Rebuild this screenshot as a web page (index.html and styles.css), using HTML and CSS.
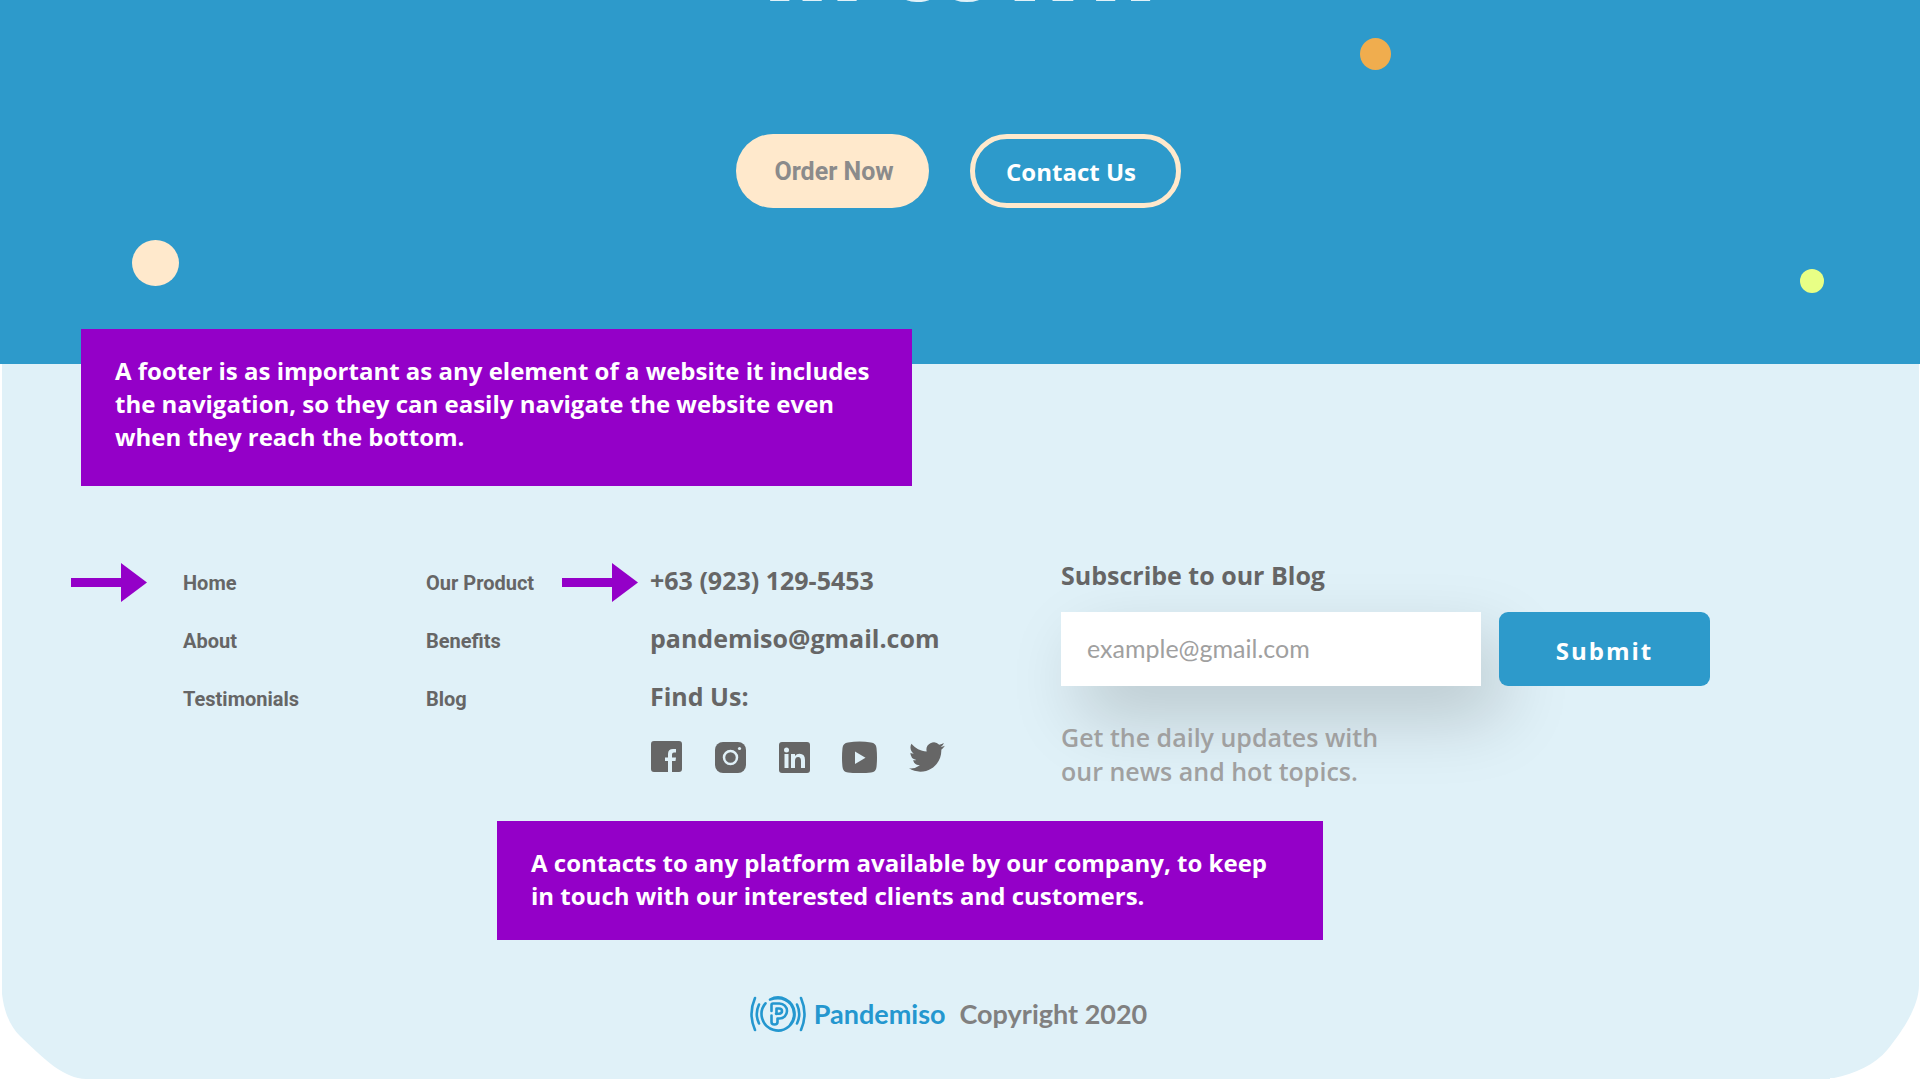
FILE: index.html
```html
<!DOCTYPE html>
<html lang="en">
<head>
<meta charset="utf-8">
<meta name="viewport" content="width=device-width, initial-scale=1">
<title>Pandemiso</title>
<link rel="stylesheet" href="styles.css">
</head>
<body>
<main class="hero">
  <h1 class="hero-title">in town</h1>
  <div class="hero-actions">
    <button type="button" class="pill pill-solid">Order Now</button>
    <button type="button" class="pill pill-outline">Contact Us</button>
  </div>
  <span class="dot dot-orange"></span>
  <span class="dot dot-cream"></span>
  <span class="dot dot-lime"></span>
</main>

<footer class="footer">
  <p class="callout callout-over">A footer is as important as any element of a website it includes<br>the navigation, so they can easily navigate the website even<br>when they reach the bottom.</p>

  <div class="columns">
    <ul class="links pointed">
      <li><a href="#home">Home</a></li>
      <li><a href="#about">About</a></li>
      <li><a href="#testimonials">Testimonials</a></li>
    </ul>
    <ul class="links">
      <li><a href="#product">Our Product</a></li>
      <li><a href="#benefits">Benefits</a></li>
      <li><a href="#blog">Blog</a></li>
    </ul>
    <address class="contact pointed">
      <a href="tel:+639231295453">+63 (923) 129-5453</a>
      <a href="mailto:pandemiso@gmail.com">pandemiso@gmail.com</a>
      <span>Find Us:</span>
      <div class="social">
        <a href="#facebook" aria-label="Facebook"><svg width="32" height="32" viewBox="0 0 32 32"><path fill="#666" fill-rule="evenodd" d="M4 0H29Q32 0 32 3V28Q32 31 29 31H22V20H25.5L26 16.500H22V13.500Q22 11.500 24 11.500H26V8H23Q18 8 18 13V16.500H15V20H18V31H4Q1 31 1 28V3Q1 0 4 0Z"/></svg></a>
        <a href="#instagram" aria-label="Instagram"><svg width="32" height="32" viewBox="0 0 32 32"><rect x="1" y="1" width="31" height="31" rx="8" fill="#666"/><circle cx="16.500" cy="16.500" r="6.500" fill="none" stroke="#e0f1f8" stroke-width="2.500"/><circle cx="25.500" cy="7.500" r="1.600" fill="#e0f1f8"/></svg></a>
        <a href="#linkedin" aria-label="LinkedIn"><svg width="32" height="32" viewBox="0 0 32 32"><rect x="1" y="1" width="31" height="31" rx="3" fill="#666"/><g fill="#e0f1f8"><circle cx="8.500" cy="9" r="2.500"/><path d="M6.500 13H10.500V27H6.500ZM13 13H17V15Q18.500 12.700 21.500 12.700Q27 12.700 27 19V27H23V20Q23 16 20.200 16Q17 16 17 20V27H13Z"/></g></svg></a>
        <a href="#youtube" aria-label="YouTube"><svg width="35" height="32" viewBox="0 0 35 32"><path fill="#666" d="M6 1.500Q17.500-.5 29 1.500Q34 2 34.500 7Q35.500 16.500 34.500 26Q34 31 29 31.500Q17.500 33 6 31.500Q1 31 .5 26Q-.5 16.500 .5 7Q1 2 6 1.500Z"/><path fill="#e0f1f8" d="M13 10.500V23L23.500 16.700Z"/></svg></a>
        <a href="#twitter" aria-label="Twitter"><svg width="36" height="32" viewBox="0 1.500 24 21"><path fill="#666" d="M23.950 4.570a10 10 0 0 1-2.820.77 4.960 4.960 0 0 0 2.160-2.720c-.95.55-2 .95-3.130 1.180a4.920 4.920 0 0 0-8.380 4.480C7.690 8.100 4.070 6.130 1.640 3.160a4.820 4.820 0 0 0-.67 2.480c0 1.710.87 3.210 2.190 4.100a4.900 4.900 0 0 1-2.230-.62v.06a4.920 4.920 0 0 0 3.950 4.830 5 5 0 0 1-2.210.08 4.940 4.940 0 0 0 4.600 3.420A9.870 9.870 0 0 1 0 19.540a14 14 0 0 0 7.550 2.210c9.050 0 14-7.500 14-13.980 0-.21 0-.42-.02-.63a9.940 9.940 0 0 0 2.420-2.570z"/></svg></a>
      </div>
    </address>
    <form class="subscribe">
      <label class="subscribe-title" for="email">Subscribe to our Blog</label>
      <div class="subscribe-row">
        <input class="field" id="email" type="email" placeholder="example@gmail.com">
        <button class="submit" type="submit">Submit</button>
      </div>
      <p class="subscribe-note">Get the daily updates with<br>our news and hot topics.</p>
    </form>
  </div>

  <p class="callout callout-inline">A contacts to any platform available by our company, to keep<br>in touch with our interested clients and customers.</p>

  <div class="brand">
    <svg width="56" height="36" viewBox="0 0 56 36" fill="none" stroke="#2497cf" stroke-width="2.600" stroke-linecap="round" stroke-linejoin="round">
      <path d="M5 2Q-2 18 5 34M9 8.500Q4.500 18 9 27.500M51 2Q58 18 51 34M47 8.500Q51.500 18 47 27.500"/>
      <path d="M15.500 7.300A16.500 16.500 0 1 0 20 3.600Q33-1 41 8.500A16.500 16.500 0 0 1 40 29"/>
      <path d="M21.500 15V9Q21.500 7.500 23 7.500H29.500A7.500 7.500 0 0 1 29.500 22.500H27.500V26Q27.500 28.500 24.500 28.500Q21.500 28.500 21.500 26V19.500"/>
      <path d="M26.500 18V12.500H29Q32 12.500 32 15T29 17.800H26"/>
    </svg>
    <span class="brand-name">Pandemiso</span>
    <span class="brand-copy">Copyright 2020</span>
  </div>

  <svg class="corner corner-left" width="90" height="180" viewBox="0 0 90 180"><path fill="#fff" d="M0 42H2L1 75C1 108 9 125 20 136C47 162 64 178 86 179H90V180H0Z"/></svg>
  <svg class="corner corner-right" width="90" height="180" viewBox="0 0 90 180"><path fill="#fff" d="M90 85H89C89 108 70 134 58 149C45 165 24 174 4 178H0V180H90Z"/></svg>
</footer>
</body>
</html>
```
FILE: styles.css
```css
* { box-sizing: border-box; }

body {
  margin: 0;
  background: #fff;
  color: #666;
  font-family: "Open Sans", "Noto Sans", sans-serif;
  font-size: 25px;
}

a { color: inherit; text-decoration: none; }
p, ul, h1 { margin: 0; padding: 0; }
ul { list-style: none; }
button, input { border: 0; font: inherit; }

.hero {
  position: relative;
  overflow: hidden;
  height: 364px;
  background: #2d9acb;
}

.hero-title {
  margin-top: -102px;
  color: #e0f1f8;
  font-size: 100px;
  font-weight: 800;
  line-height: 128px;
  text-align: center;
}

.hero-actions {
  display: flex;
  justify-content: center;
  gap: 41px;
  margin-top: 108px;
  padding-right: 4px;
}

.pill {
  height: 74px;
  border-radius: 37px;
  font-weight: 700;
  white-space: nowrap;
}

.pill-solid {
  width: 193px;
  padding: 0 0 0 4px;
  background: #ffe9cc;
  color: #8b8b8b;
  font-family: Roboto, sans-serif;
}

.pill-outline {
  width: 211px;
  padding: 0 8px 0 0;
  border: 5px solid #ffe9cc;
  background: transparent;
  color: #fff;
  font-size: 24px;
}

.dot { position: absolute; border-radius: 50%; }
.dot-orange { left: 1360px; top: 38px; width: 31px; height: 32px; background: #f0ad4e; }
.dot-cream { left: 132px; top: 240px; width: 47px; height: 46px; background: #ffe9cc; }
.dot-lime { right: 96px; top: 269px; width: 24px; height: 24px; background: #e8ff85; }

.footer {
  position: relative;
  margin: 0 1px 1px 2px;
  padding: 194px 0 47px;
  background: #e0f1f8;
}

.callout {
  padding: 25px 34px 28px;
  background: #9400c8;
  color: #fff;
  font-size: 24px;
  font-weight: 700;
  line-height: 33px;
  white-space: nowrap;
}

.callout-over {
  position: absolute;
  left: 79px;
  top: -35px;
  width: 831px;
  padding-bottom: 33px;
}

.callout-inline {
  width: 826px;
  margin: 33px 0 0 495px;
}

.columns {
  display: grid;
  grid-template-columns: 243fr 224fr 411fr 649fr;
  padding: 0 209px 0 181px;
}

.pointed { position: relative; }

.pointed::before {
  content: "";
  position: absolute;
  top: 5px;
  right: calc(100% + 12px);
  width: 76px;
  height: 39px;
  background: #9400c8;
  clip-path: polygon(0 15px, 50px 15px, 50px 0, 76px 50%, 50px 39px, 50px 24px, 0 24px);
}

.links.pointed::before { right: calc(100% + 36px); }

.links {
  display: flex;
  flex-direction: column;
  gap: 32px;
  padding-top: 12px;
  font-family: Roboto, sans-serif;
  font-size: 20px;
  font-weight: 700;
  line-height: 26px;
}

.contact {
  display: flex;
  flex-direction: column;
  align-items: flex-start;
  gap: 24px;
  padding-top: 5px;
  font-style: normal;
  font-weight: 700;
  line-height: 34px;
}

.social {
  display: flex;
  gap: 32px;
  margin-top: 4px;
  line-height: 0;
}

.subscribe-title {
  display: block;
  font-weight: 700;
  line-height: 34px;
}

.subscribe-row {
  display: flex;
  gap: 18px;
  margin-top: 20px;
}

.field {
  flex: 1;
  min-width: 0;
  height: 74px;
  padding: 0 26px 2px;
  background: #fff;
  box-shadow: 20px 30px 70px rgba(0, 0, 0, 0.18);
  color: #666;
  font-family: Lato, sans-serif;
}

.field::placeholder { color: #a0a0a0; opacity: 1; }

.submit {
  position: relative;
  width: 211px;
  height: 74px;
  padding: 2px 0 0;
  border-radius: 9px;
  background: #2d9acb;
  color: #fff;
  font-size: 24px;
  font-weight: 700;
  letter-spacing: 2px;
}

.subscribe-note {
  position: relative;
  margin-top: 34px;
  color: #a0a0a0;
  font-weight: 600;
  line-height: 34px;
}

.brand {
  display: flex;
  align-items: center;
  justify-content: center;
  margin-top: 56px;
  padding-right: 24px;
  font-family: Lato, sans-serif;
  font-size: 27px;
  font-weight: 700;
  line-height: 36px;
}

.brand-name { margin: 0 14px 0 8px; color: #2497cf; }
.brand-copy { color: #808080; }

.corner { position: absolute; bottom: -1px; }
.corner-left { left: -2px; }
.corner-right { right: -1px; }
```
